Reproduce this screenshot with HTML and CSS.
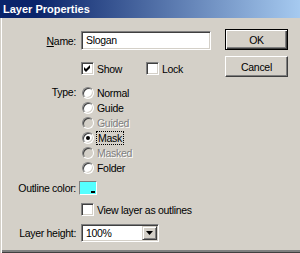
FILE: index.html
```html
<!DOCTYPE html>
<html>
<head>
<meta charset="utf-8">
<link rel="stylesheet" href="styles.css">
</head>
<body>
<div class="window">
  <div class="titlebar">Layer Properties</div>
  <div class="client">
    <div class="form">
      <div class="row">
        <div class="label"><span><u>N</u>ame:</span></div>
        <div class="textfield">Slogan</div>
      </div>
      <div class="row row-show">
        <div class="label"></div>
        <div class="check-group show-group"><span class="checkbox"><svg width="9" height="9" viewBox="0 0 9 9"><polygon points="1,3 3,5 7,1 7,4 3,8 1,6" fill="#000"/></svg></span><span>Show</span></div>
        <div class="check-group"><span class="checkbox"></span><span>Lock</span></div>
      </div>
      <div class="row row-type">
        <div class="label"><span>Type:</span></div>
        <div class="radios">
          <div class="radio-row"><span class="radio"></span><span>Normal</span></div>
          <div class="radio-row"><span class="radio"></span><span>Guide</span></div>
          <div class="radio-row disabled"><span class="radio"></span><span>Guided</span></div>
          <div class="radio-row"><span class="radio checked"></span><span class="focus">Mask</span></div>
          <div class="radio-row disabled"><span class="radio"></span><span>Masked</span></div>
          <div class="radio-row"><span class="radio"></span><span>Folder</span></div>
        </div>
      </div>
      <div class="row row-color">
        <div class="label"><span>Outline color:</span></div>
        <div class="swatch"><span class="swatch-mark"></span></div>
      </div>
      <div class="row row-outlines">
        <div class="label"></div>
        <div class="check-group"><span class="checkbox"></span><span>View layer as outlines</span></div>
      </div>
      <div class="row row-height">
        <div class="label"><span>Layer height:</span></div>
        <div class="combo"><span class="combo-text">100%</span><span class="combo-btn"><svg width="7" height="4" viewBox="0 0 7 4"><polygon points="0,0 7,0 3.5,4" fill="#000"/></svg></span></div>
      </div>
    </div>
    <div class="buttons">
      <div class="btn default"><span>OK</span></div>
      <div class="btn"><span>Cancel</span></div>
    </div>
  </div>
</div>
</body>
</html>
```
FILE: styles.css
```css
html, body {
  margin: 0;
  padding: 0;
  background: #d4d0c8;
}
body {
  font-family: "Liberation Sans", Arial, sans-serif;
  font-size: 10.5px;
  letter-spacing: -0.3px;
  color: #000;
}
.window {
  width: 300px;
  height: 253px;
  display: flex;
  flex-direction: column;
  background: #d4d0c8;
  overflow: hidden;
}
.titlebar {
  height: 18px;
  flex: none;
  line-height: 18px;
  padding-left: 3px;
  color: #fff;
  font-weight: bold;
  font-size: 11px;
  letter-spacing: 0;
  background: linear-gradient(90deg, #0a246a 0%, #0a246a 12%, #a6caf0 100%);
}
.client {
  flex: 1;
  display: flex;
  align-items: flex-start;
  box-shadow: inset 1px 0 #d4d0c8, inset 2px 0 #ffffff, inset 0 -1px #404040, inset 0 -3px #808080;
}
.form {
  width: 194px;
  padding: 13px 0 0 17px;
  display: flex;
  flex-direction: column;
}
.row {
  display: flex;
  align-items: center;
  gap: 5px;
}
.label {
  width: 59px;
  flex: none;
  display: flex;
  justify-content: flex-end;
  white-space: nowrap;
}
.textfield {
  width: 130px;
  height: 19px;
  box-sizing: border-box;
  background: #fff;
  border: 1px solid;
  border-color: #808080 #ffffff #ffffff #808080;
  box-shadow: inset 1px 1px #404040, inset -1px -1px #d4d0c8;
  padding-left: 4px;
  line-height: 17px;
}
.row-show {
  margin-top: 12px;
  height: 13px;
}
.check-group {
  display: flex;
  align-items: center;
  gap: 3px;
  white-space: nowrap;
}
.show-group {
  width: 60px;
}
.checkbox {
  width: 13px;
  height: 13px;
  flex: none;
  box-sizing: border-box;
  background: #fff;
  border: 1px solid;
  border-color: #808080 #ffffff #ffffff #808080;
  box-shadow: inset 1px 1px #404040, inset -1px -1px #d4d0c8;
  display: flex;
  align-items: center;
  justify-content: center;
}
.checkbox svg {
  display: block;
}
.row-type {
  margin-top: 10px;
  align-items: flex-start;
}
.row-type .label {
  line-height: 15px;
}
.radios {
  display: flex;
  flex-direction: column;
}
.radio-row {
  height: 15px;
  display: flex;
  align-items: center;
  gap: 3px;
}
.radio {
  width: 12px;
  height: 12px;
  flex: none;
  margin-left: 1px;
  box-sizing: border-box;
  border-radius: 50%;
  background: #fff;
  border: 1px solid;
  border-color: #808080 #ffffff #ffffff #808080;
  box-shadow: inset 1px 1px #404040, inset -1px -1px #d4d0c8;
  position: relative;
}
.radio.checked::after {
  content: "";
  position: absolute;
  left: 3px;
  top: 3px;
  width: 4px;
  height: 4px;
  border-radius: 50%;
  background: #000;
}
.disabled {
  color: #808080;
  text-shadow: 1px 1px 0 #ffffff;
}
.disabled .radio {
  background: #d4d0c8;
}
.focus {
  outline: 1px dotted #000;
  outline-offset: 0;
  padding: 0 1px;
  line-height: 12px;
}
.row-color {
  margin-top: 6px;
  height: 14px;
}
.swatch {
  width: 18px;
  height: 14px;
  margin-left: -2px;
  box-sizing: border-box;
  background: #55ffff;
  border: 1px solid;
  border-color: #808080 #ffffff #ffffff #808080;
  position: relative;
}
.swatch-mark {
  position: absolute;
  right: 1px;
  bottom: 1px;
  width: 4px;
  height: 2px;
  background: #000;
}
.row-outlines {
  margin-top: 8px;
  height: 13px;
}
.row-height {
  margin-top: 8px;
}
.combo {
  width: 78px;
  height: 18px;
  box-sizing: border-box;
  background: #fff;
  border: 1px solid;
  border-color: #808080 #ffffff #ffffff #808080;
  box-shadow: inset 1px 1px #404040, inset -1px -1px #d4d0c8;
  display: flex;
  align-items: center;
  padding: 1px;
}
.combo-text {
  flex: 1;
  padding-left: 3px;
}
.combo-btn {
  width: 15px;
  height: 14px;
  box-sizing: border-box;
  background: #d4d0c8;
  border: 1px solid;
  border-color: #d4d0c8 #404040 #404040 #d4d0c8;
  box-shadow: inset 1px 1px #ffffff, inset -1px -1px #808080;
  display: flex;
  align-items: center;
  justify-content: center;
}
.combo-btn svg {
  display: block;
}
.buttons {
  margin-left: 14px;
  padding-top: 11px;
  display: flex;
  flex-direction: column;
  gap: 6px;
}
.btn {
  width: 63px;
  height: 21px;
  box-sizing: border-box;
  border: 1px solid;
  border-color: #ffffff #404040 #404040 #ffffff;
  box-shadow: inset -1px -1px #808080;
  display: flex;
  align-items: center;
  justify-content: center;
}
.btn.default {
  border-color: #000;
  box-shadow: inset 1px 1px #ffffff, inset -1px -1px #404040, inset -2px -2px #808080;
}
```
